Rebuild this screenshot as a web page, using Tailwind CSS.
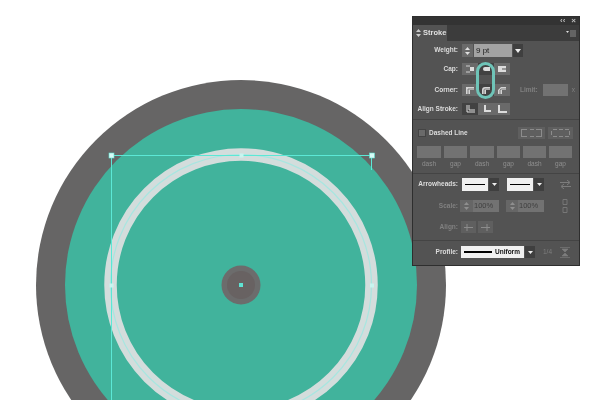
<!DOCTYPE html>
<html lang="en">
<head>
  <meta charset="UTF-8" />
  <title>Stroke panel</title>
  <script src="https://cdn.jsdelivr.net/npm/@tailwindcss/browser@4"></script>
</head>
<body class="bg-white font-['Liberation_Sans',Arial,sans-serif]">
<div class="relative w-[600px] h-[400px] overflow-hidden bg-white">

  <!-- artwork -->
  <svg class="absolute left-0 top-0" width="600" height="400" viewBox="0 0 600 400">
    <circle cx="241" cy="285" r="205" fill="#666565"/>
    <circle cx="241" cy="285" r="176" fill="#41b39c"/>
    <circle cx="241" cy="285" r="130.5" fill="none" stroke="#d3dddc" stroke-width="12.5"/>
    <circle cx="241" cy="285" r="130.5" fill="none" stroke="#a8e6e0" stroke-width="1.2"/>
    <circle cx="241" cy="285" r="19.5" fill="#6c6c6c"/>
    <circle cx="241" cy="285" r="14" fill="#686262"/>
    <path d="M111.500 400V155.500H371.500V170" fill="none" stroke="#5ce8d6" stroke-width="1"/>
    <rect x="109" y="153" width="5" height="5" fill="#d8fbf6" stroke="#5fe3d3" stroke-width="0.6"/>
    <rect x="369.500" y="153" width="5" height="5" fill="#d8fbf6" stroke="#5fe3d3" stroke-width="0.6"/>
    <rect x="239.500" y="153.500" width="4" height="4" fill="#c8f5ef"/>
    <rect x="109.500" y="283.500" width="4" height="4" fill="#c8f5ef"/>
    <rect x="370" y="283.500" width="4" height="4" fill="#c8f5ef"/>
    <rect x="239" y="283" width="4" height="4" fill="#5fe3d3"/>
  </svg>

  <!-- stroke panel -->
  <div class="absolute left-[412px] top-[16px] w-[168px] h-[250px] bg-[#535353] border border-[#2e2e2e] flex flex-col text-[6.500px] leading-none font-bold text-[#dcdcdc] blur-[0.4px]">
    <div class="h-[8px] bg-[#333333] flex items-center justify-end gap-[6px] pr-[3px] text-[8px] text-[#bdbdbd]">
      <span>‹‹</span><span>×</span>
    </div>
    <div class="h-[16px] bg-[#3c3c3c] flex justify-between">
      <div class="w-[34px] bg-[#535353] flex items-center gap-[2px] pl-[3px]">
        <svg width="5" height="8" viewBox="0 0 5 8"><path d="M0 3 2.500 0 5 3M0 5l2.500 3L5 5" fill="#cccccc"/></svg>
        <span class="text-[7.500px] text-[#e0e0e0]">Stroke</span>
      </div>
      <svg class="mt-[5px] mr-[3px]" width="10" height="7" viewBox="0 0 10 7"><path d="M0 1h3L1.500 3z" fill="#dddddd"/><path d="M4 0h6M4 2h6M4 4h6M4 6h6" stroke="#8a8a8a"/></svg>
    </div>

    <!-- weight -->
    <div class="flex items-center h-[13px] mt-[3px]">
      <span class="w-[45px] text-right">Weight:</span>
      <div class="ml-[4px] w-[11px] h-[13px] bg-[#6a6a6a] flex flex-col items-center justify-center gap-[2px]">
        <svg width="5" height="3" viewBox="0 0 5 3"><path d="M0 3 2.500 0 5 3z" fill="#e0e0e0"/></svg>
        <svg width="5" height="3" viewBox="0 0 5 3"><path d="M0 0h5L2.500 3z" fill="#e0e0e0"/></svg>
      </div>
      <div class="ml-[1px] w-[38px] h-[13px] bg-[#a3a3a3] text-[8px] text-[#1d1d1d] font-normal flex items-center pl-[2px]">9 pt</div>
      <div class="ml-[1px] w-[10px] h-[13px] bg-[#3f3f3f] flex items-center justify-center">
        <svg width="6" height="4" viewBox="0 0 6 4"><path d="M0 0h6L3 4z" fill="#eeeeee"/></svg>
      </div>
    </div>

    <!-- cap -->
    <div class="flex items-center h-[12px] mt-[6px]">
      <span class="w-[45px] text-right">Cap:</span>
      <div class="ml-[4px] flex">
        <div class="w-[16px] h-[12px] bg-[#6a6a6a] flex items-center justify-center">
          <svg width="10" height="8" viewBox="0 0 10 8"><path d="M1 1h4M1 7h4" stroke="#cfcfcf"/><path d="M5 2h4v4H5z" fill="#dcdcdc"/></svg>
        </div>
        <div class="w-[16px] h-[12px] bg-[#424242] flex items-center justify-center">
          <svg width="10" height="8" viewBox="0 0 10 8"><path d="M9 2H4a2 2 0 0 0 0 4h5z" fill="#dcdcdc"/></svg>
        </div>
        <div class="w-[16px] h-[12px] bg-[#6a6a6a] flex items-center justify-center">
          <svg width="10" height="8" viewBox="0 0 10 8"><path d="M1 1h8v6H1z" fill="#dcdcdc"/><path d="M5 4h4" stroke="#555555"/></svg>
        </div>
      </div>
    </div>

    <!-- corner -->
    <div class="flex items-center h-[12px] mt-[9px]">
      <span class="w-[45px] text-right">Corner:</span>
      <div class="ml-[4px] flex">
        <div class="w-[16px] h-[12px] bg-[#6a6a6a] flex items-center justify-center">
          <svg width="10" height="9" viewBox="0 0 10 9"><path d="M1 1h8v3H5v4H1z" fill="#d4d4d4"/><path d="M3 8V3h6" fill="none" stroke="#6a6a6a" stroke-width=".8"/></svg>
        </div>
        <div class="w-[16px] h-[12px] bg-[#424242] flex items-center justify-center">
          <svg width="10" height="9" viewBox="0 0 10 9"><path d="M1 4a3 3 0 0 1 3-3h5v3H5v4H1z" fill="#d4d4d4"/><path d="M3 8V4a1 1 0 0 1 1-1h5" fill="none" stroke="#6a6a6a" stroke-width=".8"/></svg>
        </div>
        <div class="w-[16px] h-[12px] bg-[#6a6a6a] flex items-center justify-center">
          <svg width="10" height="9" viewBox="0 0 10 9"><path d="M1 4l3-3h5v3H5v4H1z" fill="#d4d4d4"/><path d="M3 8V4l1-1h5" fill="none" stroke="#6a6a6a" stroke-width=".8"/></svg>
        </div>
      </div>
      <span class="ml-[10px] text-[#808080]">Limit:</span>
      <div class="ml-[5px] w-[25px] h-[12px] bg-[#727272]"></div>
      <span class="ml-[4px] text-[#808080] font-normal">x</span>
    </div>

    <!-- align stroke -->
    <div class="flex items-center h-[12px] mt-[7px]">
      <span class="w-[45px] text-right whitespace-nowrap">Align Stroke:</span>
      <div class="ml-[4px] flex">
        <div class="w-[16px] h-[12px] bg-[#424242] flex items-center justify-center">
          <svg width="10" height="9" viewBox="0 0 10 9"><path d="M2 0v7h8M4 0v5h6" fill="none" stroke="#dcdcdc"/></svg>
        </div>
        <div class="w-[16px] h-[12px] bg-[#6a6a6a] flex items-center justify-center">
          <svg width="10" height="9" viewBox="0 0 10 9"><path d="M4 0v6h6" fill="none" stroke="#dcdcdc" stroke-width="2"/></svg>
        </div>
        <div class="w-[16px] h-[12px] bg-[#6a6a6a] flex items-center justify-center">
          <svg width="10" height="9" viewBox="0 0 10 9"><path d="M2 0v7h8" fill="none" stroke="#dcdcdc" stroke-width="2"/></svg>
        </div>
      </div>
    </div>

    <div class="h-px bg-[#444444] mt-[4px]"></div>

    <!-- dashed line -->
    <div class="flex items-center h-[12px] mt-[7px] pl-[5px]">
      <div class="w-[8px] h-[8px] bg-[#6a6a6a] border border-[#444444]"></div>
      <span class="ml-[3px]">Dashed Line</span>
      <div class="ml-auto mr-[6px] flex gap-[3px]">
        <div class="w-[27px] h-[12px] bg-[#5f5f5f] flex items-center justify-center">
          <svg width="21" height="8" viewBox="0 0 21 8"><path d="M0 .5h6M9 .5h4M15 .5h6M0 7.500h6M9 7.500h4M15 7.500h6M.5 0v8M20.500 0v8" stroke="#8c8c8c"/></svg>
        </div>
        <div class="w-[25px] h-[12px] bg-[#5f5f5f] flex items-center justify-center">
          <svg width="19" height="8" viewBox="0 0 19 8"><path d="M2 .5h4M8 .5h4M14 .5h4M2 7.500h4M8 7.500h4M14 7.500h4M.5 2v4M18.500 2v4" stroke="#8c8c8c"/></svg>
        </div>
      </div>
    </div>

    <!-- dash and gap boxes -->
    <div class="grid grid-cols-[24px_23px_24px_23px_23px_23px] gap-x-[3px] pl-[4px] mt-[7px]">
      <div class="h-[12px] bg-[#727272]"></div>
      <div class="h-[12px] bg-[#727272]"></div>
      <div class="h-[12px] bg-[#727272]"></div>
      <div class="h-[12px] bg-[#727272]"></div>
      <div class="h-[12px] bg-[#727272]"></div>
      <div class="h-[12px] bg-[#727272]"></div>
      <span class="mt-[3px] h-[7px] text-center font-normal text-[#8f8f8f]">dash</span>
      <span class="mt-[3px] h-[7px] text-center font-normal text-[#8f8f8f]">gap</span>
      <span class="mt-[3px] h-[7px] text-center font-normal text-[#8f8f8f]">dash</span>
      <span class="mt-[3px] h-[7px] text-center font-normal text-[#8f8f8f]">gap</span>
      <span class="mt-[3px] h-[7px] text-center font-normal text-[#8f8f8f]">dash</span>
      <span class="mt-[3px] h-[7px] text-center font-normal text-[#8f8f8f]">gap</span>
    </div>

    <div class="h-px bg-[#444444] mt-[5px]"></div>

    <!-- arrowheads -->
    <div class="flex items-center h-[13px] mt-[4px]">
      <span class="w-[45px] text-right">Arrowheads:</span>
      <div class="ml-[4px] w-[26px] h-[13px] bg-[#f0f0f0] flex items-center justify-center"><div class="w-[20px] h-[1.500px] bg-black"></div></div>
      <div class="ml-[1px] w-[10px] h-[13px] bg-[#3f3f3f] flex items-center justify-center">
        <svg width="5" height="3" viewBox="0 0 5 3"><path d="M0 0h5L2.500 3z" fill="#eeeeee"/></svg>
      </div>
      <div class="ml-[8px] w-[26px] h-[13px] bg-[#f0f0f0] flex items-center justify-center"><div class="w-[20px] h-[1.500px] bg-black"></div></div>
      <div class="ml-[1px] w-[10px] h-[13px] bg-[#3f3f3f] flex items-center justify-center">
        <svg width="5" height="3" viewBox="0 0 5 3"><path d="M0 0h5L2.500 3z" fill="#eeeeee"/></svg>
      </div>
      <svg class="ml-[16px]" width="11" height="9" viewBox="0 0 11 9"><path d="M0 2.500h9M2 6.500h9" stroke="#7d7d7d"/><path d="M7 0l3 2.500L7 5M4 4 1 6.500 4 9" fill="none" stroke="#7d7d7d"/></svg>
    </div>

    <!-- scale -->
    <div class="flex items-center h-[12px] mt-[9px]">
      <span class="w-[45px] text-right text-[#808080]">Scale:</span>
      <div class="ml-[2px] w-[13px] h-[12px] bg-[#666666] flex flex-col items-center justify-center gap-[2px]">
        <svg width="5" height="3" viewBox="0 0 5 3"><path d="M0 3 2.500 0 5 3z" fill="#8f8f8f"/></svg>
        <svg width="5" height="3" viewBox="0 0 5 3"><path d="M0 0h5L2.500 3z" fill="#8f8f8f"/></svg>
      </div>
      <div class="w-[26px] h-[12px] bg-[#727272] text-[7.500px] text-[#3f3f3f] font-normal flex items-center pl-[1px]">100%</div>
      <div class="ml-[7px] w-[12px] h-[12px] bg-[#666666] flex flex-col items-center justify-center gap-[2px]">
        <svg width="5" height="3" viewBox="0 0 5 3"><path d="M0 3 2.500 0 5 3z" fill="#8f8f8f"/></svg>
        <svg width="5" height="3" viewBox="0 0 5 3"><path d="M0 0h5L2.500 3z" fill="#8f8f8f"/></svg>
      </div>
      <div class="w-[26px] h-[12px] bg-[#727272] text-[7.500px] text-[#3f3f3f] font-normal flex items-center pl-[1px]">100%</div>
      <svg class="ml-[17px]" width="8" height="14" viewBox="0 0 8 14"><path d="M2 .5h4v5H2zM2 8.500h4v5H2z" fill="none" stroke="#777777"/></svg>
    </div>

    <!-- align -->
    <div class="flex items-center h-[12px] mt-[9px]">
      <span class="w-[45px] text-right text-[#808080]">Align:</span>
      <div class="ml-[3px] flex gap-[2px]">
        <div class="w-[15px] h-[12px] bg-[#5f5f5f] flex items-center justify-center">
          <svg width="9" height="7" viewBox="0 0 9 7"><path d="M0 3.500h9M3 0v7" stroke="#8c8c8c"/></svg>
        </div>
        <div class="w-[15px] h-[12px] bg-[#5f5f5f] flex items-center justify-center">
          <svg width="9" height="7" viewBox="0 0 9 7"><path d="M0 3.500h9M6 0v7" stroke="#8c8c8c"/></svg>
        </div>
      </div>
    </div>

    <div class="h-px bg-[#444444] mt-[7px]"></div>

    <!-- profile -->
    <div class="flex items-center h-[12px] mt-[5px]">
      <span class="w-[45px] text-right">Profile:</span>
      <div class="ml-[3px] w-[63px] h-[12px] bg-[#f0f0f0] flex items-center pl-[3px] gap-[3px] text-[#111111]">
        <div class="w-[28px] h-[2px] bg-black"></div>
        <span>Uniform</span>
      </div>
      <div class="ml-[1px] w-[10px] h-[12px] bg-[#3f3f3f] flex items-center justify-center">
        <svg width="5" height="3" viewBox="0 0 5 3"><path d="M0 0h5L2.500 3z" fill="#eeeeee"/></svg>
      </div>
      <span class="ml-[8px] font-normal text-[#7d7d7d]">1/4</span>
      <svg class="ml-[8px]" width="10" height="11" viewBox="0 0 10 11"><path d="M0 .5h10M0 10.500h10M2 2h6L5 5zM2 9h6L5 6z" fill="#7d7d7d" stroke="#7d7d7d" stroke-width=".6"/></svg>
    </div>
  </div>

  <!-- highlight around round cap and round join -->
  <div class="absolute left-[476px] top-[62px] w-[19px] h-[37px] rounded-full border-[3px] border-[#6fc4b8]"></div>
</div>
</body>
</html>
